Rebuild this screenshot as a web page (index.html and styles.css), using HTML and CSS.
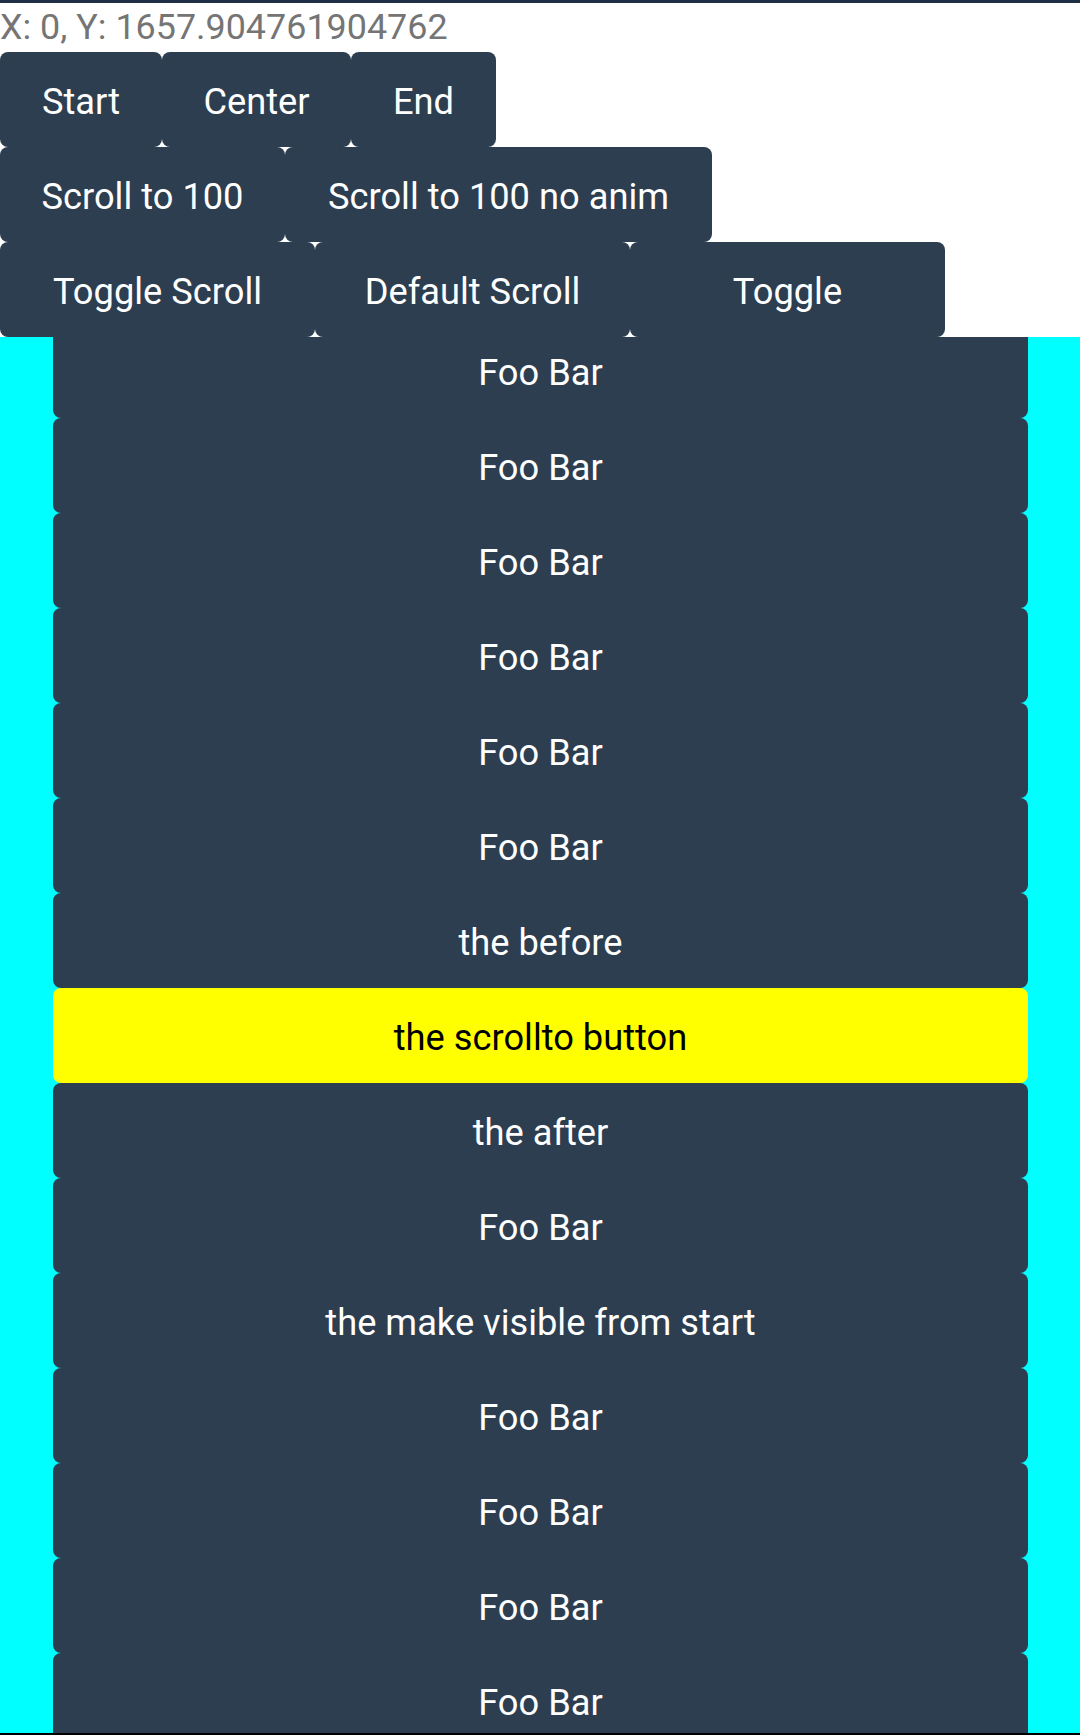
FILE: index.html
```html
<!DOCTYPE html>
<html>
<head>
<meta charset="utf-8">
<title>Scroll demo</title>
<link rel="stylesheet" href="styles.css">
</head>
<body>
<div class="page">
  <div class="topbar"></div>
  <div class="coords">X: 0, Y: 1657.904761904762</div>
  <div class="row">
    <div class="btn w-start">Start</div>
    <div class="btn w-center">Center</div>
    <div class="btn w-end">End</div>
  </div>
  <div class="row">
    <div class="btn w-s100">Scroll to 100</div>
    <div class="btn w-s100na">Scroll to 100 no anim</div>
  </div>
  <div class="row">
    <div class="btn w-third">Toggle Scroll</div>
    <div class="btn w-third">Default Scroll</div>
    <div class="btn w-third">Toggle</div>
  </div>
  <div class="scroller">
    <div class="list">
      <div class="item first">Foo Bar</div>
      <div class="item">Foo Bar</div>
      <div class="item">Foo Bar</div>
      <div class="item">Foo Bar</div>
      <div class="item">Foo Bar</div>
      <div class="item">Foo Bar</div>
      <div class="item">the before</div>
      <div class="item target">the scrollto button</div>
      <div class="item">the after</div>
      <div class="item">Foo Bar</div>
      <div class="item">the make visible from start</div>
      <div class="item">Foo Bar</div>
      <div class="item">Foo Bar</div>
      <div class="item">Foo Bar</div>
      <div class="item">Foo Bar</div>
      <div class="item">Foo Bar</div>
    </div>
  </div>
  <div class="bottombar"></div>
</div>
</body>
</html>
```
FILE: styles.css
```css
html, body {
  margin: 0;
  padding: 0;
  background: #ffffff;
}

.page {
  width: 1080px;
  height: 1735px;
  display: flex;
  flex-direction: column;
  font-family: Roboto, "Noto Sans", sans-serif;
  overflow: hidden;
}

.topbar {
  height: 3px;
  background: #1f2f46;
  flex: none;
}

.coords {
  flex: none;
  height: 49px;
  line-height: 49px;
  font-size: 35.9px;
  color: #757575;
  white-space: nowrap;
}

.row {
  flex: none;
  display: flex;
  height: 95px;
}

.btn {
  box-sizing: border-box;
  height: 95px;
  padding-top: 4px;
  display: flex;
  align-items: center;
  justify-content: center;
  background: #2c3e50;
  color: #ffffff;
  font-size: 36.25px;
  border-radius: 8px;
  white-space: nowrap;
  flex: none;
}

.w-start { width: 162px; }
.w-center { width: 189px; }
.w-end { width: 145px; }
.w-s100 { width: 285px; }
.w-s100na { width: 427px; }
.w-third { width: 315px; }

.scroller {
  flex: 1;
  min-height: 0;
  background: #00ffff;
  overflow: hidden;
  padding: 0 52px 0 53px;
}

.list {
  display: flex;
  flex-direction: column;
}

.item {
  box-sizing: border-box;
  flex: none;
  height: 95px;
  padding-top: 4px;
  display: flex;
  align-items: center;
  justify-content: center;
  background: #2c3e50;
  color: #ffffff;
  font-size: 36.25px;
  border-radius: 8px;
  white-space: nowrap;
}

.item.first {
  margin-top: -14px;
}

.item.target {
  background: #ffff00;
  color: #000000;
}

.bottombar {
  flex: none;
  height: 2px;
  background: #000000;
}
```
